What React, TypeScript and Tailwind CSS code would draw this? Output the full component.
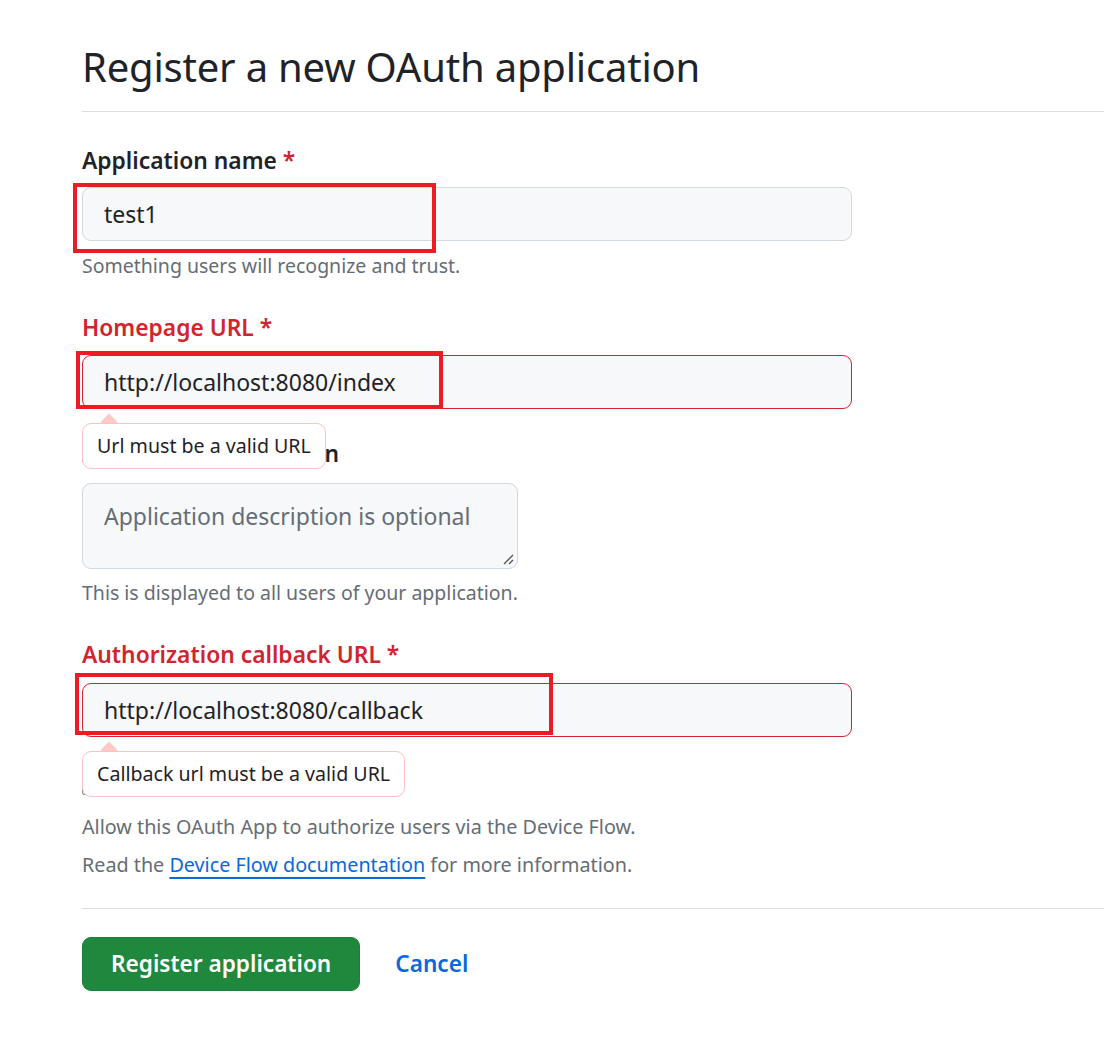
import React from "react";

const font = { fontFamily: '"Noto Sans", "Open Sans", sans-serif' };

function Mark({ className }: { className: string }) {
    // red annotation rectangle drawn over the screenshot
    return <div className={`pointer-events-none absolute border-[4px] border-[#ed1c24] ${className}`} />;
}

function ErrorTip({ text }: { text: string }) {
    return (
        <div className="absolute left-0 top-full z-10 mt-[14px]">
            <div className="absolute -top-[7px] left-[21px] h-[12px] w-[12px] rotate-45 bg-[#ffc9c9]" />
            <div className="relative rounded-[9px] border border-[#ffc1c1] bg-white px-[14px] py-[9px] text-[19.6px] leading-[26px] text-[#1f2328]">
                {text}
            </div>
        </div>
    );
}

export default function App() {
    return (
        <div className="min-h-[1053px] overflow-hidden bg-white text-[#1f2328]" style={font}>
            <div className="pl-[82px]">
                <div className="border-b border-[#d8dee4] pb-[17px] pt-[40px]">
                    <h1 className="text-[40px] font-normal leading-[54px] tracking-[-0.2px]">Register a new OAuth application</h1>
                </div>

                <div className="w-[770px]">
                    {/* application name */}
                    <div className="mt-[34px]">
                        <label className="block text-[22.8px] font-semibold leading-[30px]">
                            Application name <span className="text-[#d1242f]">*</span>
                        </label>
                        <div className="relative mt-[11px]">
                            <div className="flex h-[54px] items-center rounded-[9px] border border-[#d1d9e0] bg-[#f6f8fa] px-[21px] text-[23px]">test1</div>
                            <Mark className="-left-[9px] -top-[4px] h-[70px] w-[363px]" />
                        </div>
                        <p className="mt-[12px] text-[19.5px] leading-[26px] text-[#656d76]">Something users will recognize and trust.</p>
                    </div>

                    {/* homepage */}
                    <div className="mt-[34px]">
                        <label className="block text-[22.8px] font-semibold leading-[30px] text-[#d1242f]">Homepage URL *</label>
                        <div className="relative mt-[12px]">
                            <div className="flex h-[54px] items-center rounded-[9px] border border-[#d1242f] bg-[#f6f8fa] px-[21px] text-[23px]">http://localhost:8080/index</div>
                            <Mark className="-left-[6px] -top-[4px] h-[58px] w-[367px]" />
                            <ErrorTip text="Url must be a valid URL" />
                        </div>
                    </div>

                    {/* description */}
                    <div className="mt-[30px]">
                        <label className="block text-[22.8px] font-semibold leading-[30px]">Application description</label>
                        <div className="relative mt-[14px] h-[86px] w-[436px] rounded-[9px] border border-[#d1d9e0] bg-[#f6f8fa] px-[21px] pt-[16px] text-[23px] leading-[32px] text-[#656d76]">
                            Application description is optional
                            <svg className="absolute bottom-[3px] right-[3px]" width="12" height="12" viewBox="0 0 12 12">
                                <path d="M11 2 L2 11 M11 7 L7 11" stroke="#555" strokeWidth="1.3" />
                            </svg>
                        </div>
                        <p className="mt-[11px] text-[19.5px] leading-[26px] text-[#656d76]">This is displayed to all users of your application.</p>
                    </div>

                    {/* callback */}
                    <div className="mt-[34px]">
                        <label className="block text-[22.8px] font-semibold leading-[30px] text-[#d1242f]">Authorization callback URL *</label>
                        <div className="relative mt-[13px]">
                            <div className="flex h-[54px] items-center rounded-[9px] border border-[#d1242f] bg-[#f6f8fa] px-[21px] text-[23px]">http://localhost:8080/callback</div>
                            <Mark className="-left-[7px] -top-[10px] h-[62px] w-[478px]" />
                            <ErrorTip text="Callback url must be a valid URL" />
                        </div>
                    </div>

                    {/* device flow */}
                    <div className="mt-[34px]">
                        <label className="flex items-center gap-[8px] text-[21px] font-semibold leading-[30px]">
                            <input type="checkbox" className="h-[18px] w-[18px]" />
                            Enable Device Flow
                        </label>
                        <p className="mt-[13px] text-[19.75px] leading-[26px] text-[#656d76]">Allow this OAuth App to authorize users via the Device Flow.</p>
                        <p className="mt-[12px] text-[19.75px] leading-[26px] text-[#656d76]">
                            Read the{" "}
                            <a className="text-[#0969da] underline decoration-[2px] underline-offset-[5px]">Device Flow documentation</a>{" "}
                            for more information.
                        </p>
                    </div>
                </div>

                <div className="mt-[30px] border-t border-[#d8dee4] pt-[28px]">
                    <div className="flex items-center gap-[35px]">
                        <button className="h-[54px] rounded-[9px] border border-[#1a7f37] bg-[#1f883d] px-[28px] text-[22.6px] font-semibold text-white">Register application</button>
                        <a className="text-[22.6px] font-semibold text-[#0969da]">Cancel</a>
                    </div>
                </div>
            </div>
        </div>
    );
}
